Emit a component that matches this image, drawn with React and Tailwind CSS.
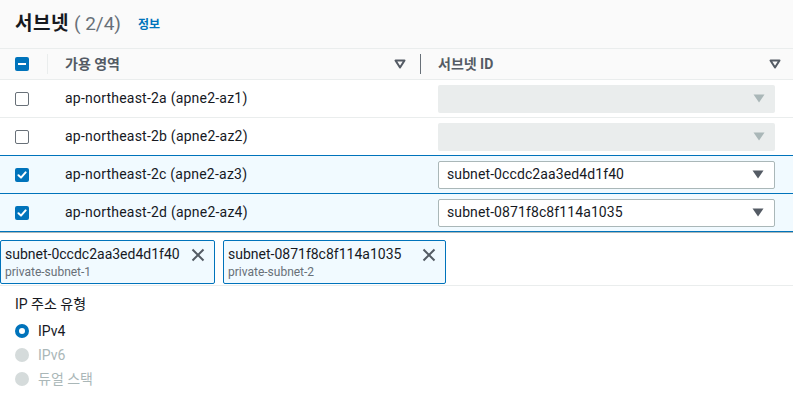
import React from "react";

const font = { fontFamily: "Roboto, 'Noto Sans CJK KR', sans-serif" };

function SortIcon() {
  return (
    <svg width="12" height="10" viewBox="0 0 12 10" className="shrink-0">
      <path d="M1.5 1.5 L10.5 1.5 L6 8.5 Z" fill="none" stroke="#545b64" strokeWidth="2" strokeLinejoin="round" />
    </svg>
  );
}

function Caret({ color }) {
  return (
    <svg width="12" height="9" viewBox="0 0 12 9" className="shrink-0">
      <path d="M0.5 0.5 L11.5 0.5 L6 8.5 Z" fill={color} />
    </svg>
  );
}

function Checkbox({ state }) {
  if (state === "none") {
    return <div className="w-[14px] h-[14px] rounded-[2px] border border-[#687078] bg-white" />;
  }
  return (
    <div className="w-[14px] h-[14px] rounded-[2px] bg-[#0073bb] flex items-center justify-center">
      {state === "checked" ? (
        <svg width="10" height="10" viewBox="0 0 10 10">
          <path d="M1.5 5.2 L4 7.6 L8.6 2.4" fill="none" stroke="white" strokeWidth="2" strokeLinecap="round" strokeLinejoin="round" />
        </svg>
      ) : (
        <div className="w-[8px] h-[2px] bg-white" />
      )}
    </div>
  );
}

function Row({ az, subnet, selected, last }) {
  return (
    <div
      className={
        "grid grid-cols-[48px_373px_1fr] h-[38px] border-t items-center " +
        (selected ? "border-[#0073bb] bg-[#f1faff]" : "border-[#eaeded] bg-white") +
        (last ? " h-[39px] border-b" : "")
      }
    >
      <div className="pl-[15px] flex items-center">
        <Checkbox state={selected ? "checked" : "none"} />
      </div>
      <div className="pl-[17px] text-[14px] tracking-[0.22px] text-[#16191f]">{az}</div>
      <div className="pl-[17px] pr-[18px]">
        {subnet ? (
          <div className="h-[28px] bg-white border border-[#aab7b8] rounded-[2px] flex items-center justify-between pl-[8px] pr-[10px] text-[14px] tracking-[0.1px] text-[#16191f]">
            <span>{subnet}</span>
            <Caret color="#545b64" />
          </div>
        ) : (
          <div className="h-[28px] bg-[#eaeded] rounded-[2px] flex items-center justify-end pr-[10px]">
            <Caret color="#aab7b8" />
          </div>
        )}
      </div>
    </div>
  );
}

function Token({ id, name, w }) {
  return (
    <div className={"h-[44px] border border-[#0073bb] bg-[#f1faff] rounded-[2px] pl-[4px] pr-[8px] flex items-start justify-between " + w}>
      <div className="flex flex-col pt-[3px]">
        <span className="text-[14px] leading-[20px] text-[#16191f]">{id}</span>
        <span className="text-[12px] leading-[16px] text-[#687078]">{name}</span>
      </div>
      <svg width="16" height="16" viewBox="0 0 16 16" className="mt-[6px]">
        <path d="M2.5 2.5 L13.5 13.5 M13.5 2.5 L2.5 13.5" stroke="#545b64" strokeWidth="2" />
      </svg>
    </div>
  );
}

function Radio({ label, checked }) {
  return (
    <div className="flex items-center h-[24px] gap-[9px]">
      {checked ? (
        <div className="w-[14px] h-[14px] rounded-full border-[4px] border-[#0073bb] bg-white" />
      ) : (
        <div className="w-[14px] h-[14px] rounded-full bg-[#d5dbdb]" />
      )}
      <span className={"text-[14px] " + (checked ? "text-[#16191f]" : "text-[#aab7b8]")}>{label}</span>
    </div>
  );
}

export default function App() {
  return (
    <div style={font} className="w-[793px] h-[397px] bg-white overflow-hidden">
      <div className="h-[48px] bg-[#fafafa] flex items-center pl-[15px] pt-[1px]">
        <span className="text-[19px] tracking-[0.5px] font-bold text-[#16191f]">서브넷</span>
        <span className="text-[19px] text-[#687078] ml-[5px]">( 2/4)</span>
        <span className="text-[12px] font-bold text-[#0073bb] ml-[17px]">정보</span>
      </div>
      <div className="grid grid-cols-[48px_373px_1fr] h-[31px] border-t border-[#eaeded] bg-[#fafafa] items-center">
        <div className="pl-[15px] flex items-center border-r border-[#eaeded] h-[20px]">
          <Checkbox state="indeterminate" />
        </div>
        <div className="pl-[17px] pr-[14px] flex items-center justify-between border-r border-[#687078] h-[20px]">
          <span className="text-[14px] font-bold text-[#545b64]">가용 영역</span>
          <SortIcon />
        </div>
        <div className="pl-[17px] pr-[12px] flex items-center justify-between">
          <span className="text-[14px] font-bold text-[#545b64]">서브넷 ID</span>
          <SortIcon />
        </div>
      </div>
      <Row az="ap-northeast-2a (apne2-az1)" />
      <Row az="ap-northeast-2b (apne2-az2)" />
      <Row az="ap-northeast-2c (apne2-az3)" subnet="subnet-0ccdc2aa3ed4d1f40" selected />
      <Row az="ap-northeast-2d (apne2-az4)" subnet="subnet-0871f8c8f114a1035" selected last />
      <div className="h-[1px] bg-[#aab7b8]" />
      <div className="flex gap-[8px] pt-[7px] pb-[1px] border-b border-[#eaeded]">
        <Token id="subnet-0ccdc2aa3ed4d1f40" name="private-subnet-1" w="w-[215px]" />
        <Token id="subnet-0871f8c8f114a1035" name="private-subnet-2" w="w-[223px]" />
      </div>
      <div className="pl-[15px] pt-[7px]">
        <div className="text-[14px] text-[#16191f] h-[22px] leading-[22px]">IP 주소 유형</div>
        <div className="pt-[4px]">
          <Radio label="IPv4" checked />
          <Radio label="IPv6" />
          <Radio label="듀얼 스택" />
        </div>
      </div>
    </div>
  );
}
